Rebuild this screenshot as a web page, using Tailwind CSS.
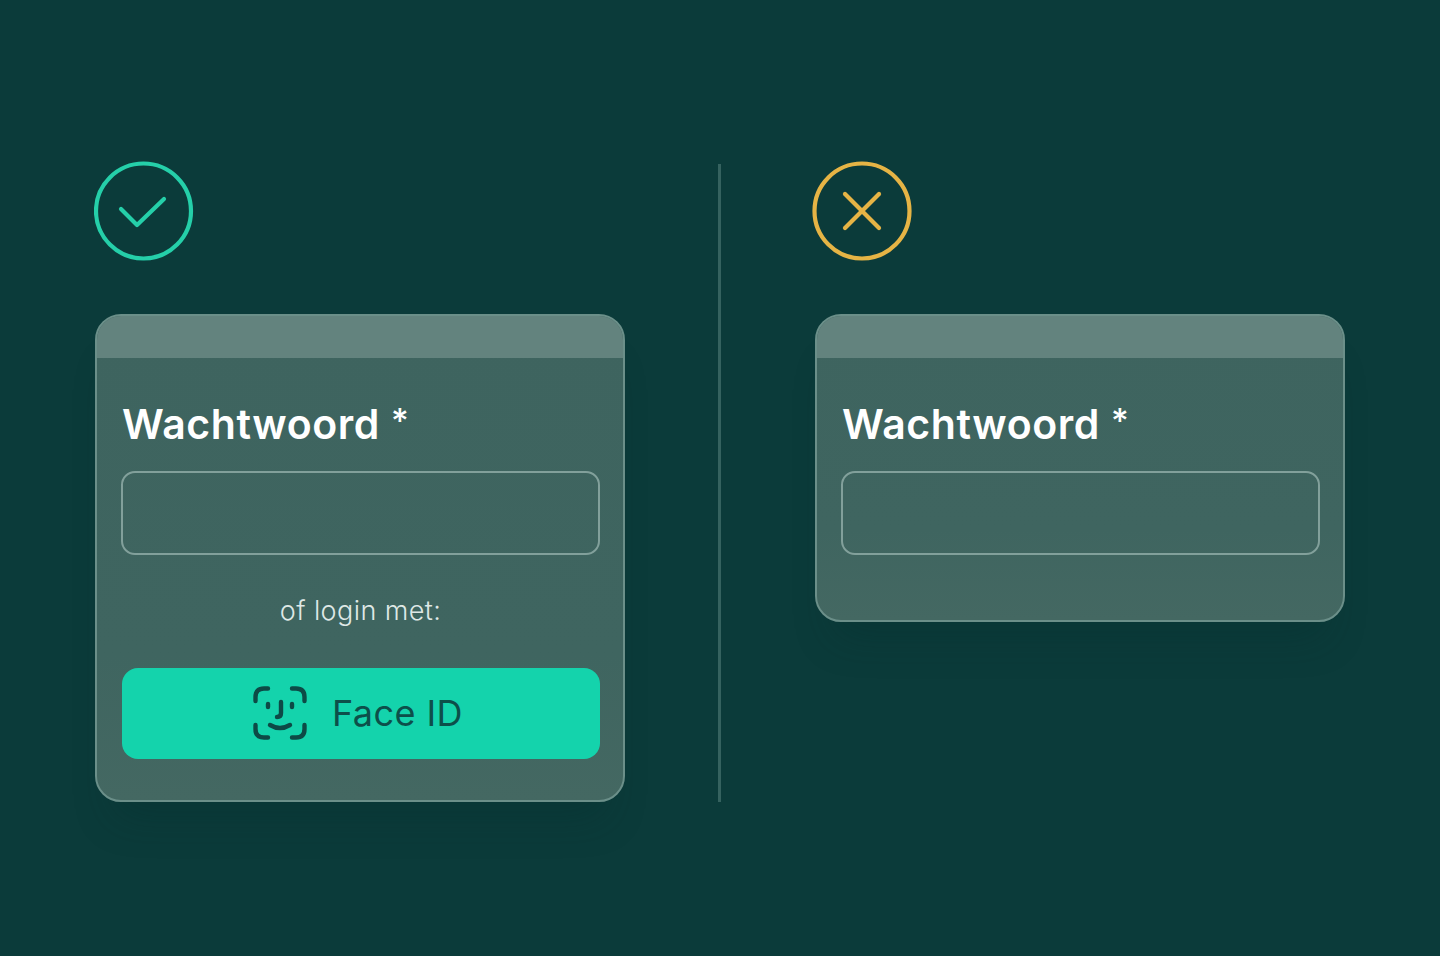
<!DOCTYPE html>
<html lang="en">
<head>
    <meta charset="UTF-8">
    <meta name="viewport" content="width=device-width, initial-scale=1.0">
    <title>Wachtwoord</title>
    <script src="https://cdn.jsdelivr.net/npm/@tailwindcss/browser@4"></script>
</head>
<body class="bg-[#0b3b3a] h-[956px] overflow-hidden font-['Inter',sans-serif]">
    <div class="flex pt-[161px]">
        <!-- Do -->
        <div class="w-[624px] ml-[94px]">
            <svg class="w-[100px] h-[100px] block" viewBox="0 0 100 100" fill="none" stroke="#25cfa9" stroke-width="4.2" stroke-linecap="round" stroke-linejoin="round">
                <circle cx="49.5" cy="50" r="47.5"/>
                <path d="M27 48 L43 64 L70 38"/>
            </svg>
            <div class="mt-[53px] ml-px w-[530px] h-[488px] rounded-[26px] border-2 border-[#6b8f89] bg-linear-to-b from-[#3e645f] via-[#3f6560] via-70% to-[#446862] shadow-[0_34px_40px_-20px_rgba(4,40,38,0.25)] overflow-hidden">
                <div class="h-[42px] bg-[#63837e]"></div>
                <div class="pl-[24px] pr-[23px]">
                    <div class="mt-[35px] pl-px text-[41px] leading-[56px] font-semibold text-white tracking-[0.6px]">Wachtwoord <span class="text-[34px] align-[6px] font-medium">*</span></div>
                    <div class="mt-[19px] h-[84px] rounded-[14px] border-2 border-[#82a09b]"></div>
                    <div class="mt-[37px] text-center text-[27px] leading-[38px] font-light text-[#dfe8e6] tracking-[0.4px]">of login met:</div>
                    <div class="mt-[38px] ml-px h-[91px] rounded-[16px] bg-[#14d3ac] flex items-center justify-center gap-[25px] pr-[6px]">
                        <svg class="w-[54px] h-[54px] -mt-[1px]" viewBox="0 0 54 54" fill="none" stroke="#0d4a46" stroke-width="4.4" stroke-linecap="round" stroke-linejoin="round">
                            <path d="M2.5 15 V11 Q2.5 2.5 11 2.5 H15"/>
                            <path d="M39 2.5 H43 Q51.5 2.5 51.5 11 V15"/>
                            <path d="M2.5 39 V43 Q2.5 51.5 11 51.5 H15"/>
                            <path d="M39 51.5 H43 Q51.5 51.5 51.5 43 V39"/>
                            <path d="M15 18 V21"/>
                            <path d="M39 18 V21"/>
                            <path d="M28 16 V27 Q28 31 24 31"/>
                            <path d="M17 39 Q27 45 37 39"/>
                        </svg>
                        <span class="-mt-[2px] text-[36px] leading-[44px] font-normal text-[#0d4f4a] tracking-[0.45px]">Face ID</span>
                    </div>
                </div>
            </div>
        </div>

        <!-- Divider -->
        <div class="w-[3px] h-[638px] mt-[3px] bg-[#35625f]"></div>

        <!-- Don't -->
        <div class="ml-[91px]">
            <svg class="w-[100px] h-[100px] block" viewBox="0 0 100 100" fill="none" stroke="#e6b445" stroke-width="4.2" stroke-linecap="round">
                <circle cx="50" cy="50" r="47.5"/>
                <path d="M33 33 L67 67"/>
                <path d="M67 33 L33 67"/>
            </svg>
            <div class="mt-[53px] ml-[3px] w-[530px] h-[308px] rounded-[26px] border-2 border-[#6b8f89] bg-linear-to-b from-[#3e645f] via-[#3f6560] via-70% to-[#446862] shadow-[0_34px_40px_-20px_rgba(4,40,38,0.25)] overflow-hidden">
                <div class="h-[42px] bg-[#63837e]"></div>
                <div class="pl-[24px] pr-[23px]">
                    <div class="mt-[35px] pl-px text-[41px] leading-[56px] font-semibold text-white tracking-[0.6px]">Wachtwoord <span class="text-[34px] align-[6px] font-medium">*</span></div>
                    <div class="mt-[19px] h-[84px] rounded-[14px] border-2 border-[#82a09b]"></div>
                </div>
            </div>
        </div>
    </div>
</body>
</html>
